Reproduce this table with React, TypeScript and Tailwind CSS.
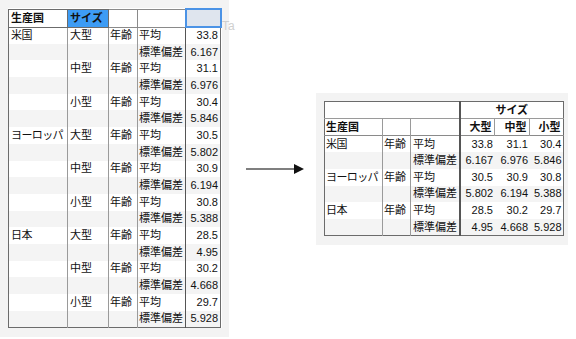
import React from 'react';

const font = { fontFamily: '"Liberation Sans", "Noto Sans CJK JP", sans-serif' };

type Stat = { label: string; value: string };
const countries = [
  { name: '米国', sizes: [['33.8', '6.167'], ['31.1', '6.976'], ['30.4', '5.846']] },
  { name: 'ヨーロッパ', sizes: [['30.5', '5.802'], ['30.9', '6.194'], ['30.8', '5.388']] },
  { name: '日本', sizes: [['28.5', '4.95'], ['30.2', '4.668'], ['29.7', '5.928']] },
];
const sizeNames = ['大型', '中型', '小型'];

const Arrow = () => (
  <svg width="60" height="12" viewBox="0 0 60 12">
    <line x1="0" y1="6" x2="50" y2="6" stroke="#555" strokeWidth="1.5" />
    <polygon points="48,1 58,6 48,11" fill="#111" />
  </svg>
);

const LeftTable = () => {
  const rows: { country: string; size: string; stat: Stat; first: boolean }[] = [];
  countries.forEach(c =>
    c.sizes.forEach((s, si) => {
      rows.push({ country: si === 0 ? c.name : '', size: sizeNames[si], stat: { label: '平均', value: s[0] }, first: true });
      rows.push({ country: '', size: '', stat: { label: '標準偏差', value: s[1] }, first: false });
    })
  );

  return (
    <table className="table-fixed border-collapse border border-[#6b6b6b] bg-white text-[11px] text-[#111]">
      <colgroup>
        <col className="w-[59px]" />
        <col className="w-[41px]" />
        <col className="w-[29px]" />
        <col className="w-[48px]" />
        <col className="w-[35px]" />
      </colgroup>
      <thead>
        <tr className="h-[18px]">
          <th className="border border-[#6b6b6b] px-[2px] text-left font-bold leading-none">生産国</th>
          <th className="border border-[#6b6b6b] bg-[#3d9cf5] px-[2px] text-left font-bold leading-none">サイズ</th>
          <th className="border border-[#8a8a8a]"></th>
          <th className="border border-[#8a8a8a]"></th>
          <th className="border-2 border-[#4b93e6] bg-[#dfe5ee]"></th>
        </tr>
      </thead>
      <tbody>
        {rows.map((r, i) => (
          <tr key={i} className={`h-[16.7px] ${i % 2 === 1 ? 'bg-[#f4f4f4]' : 'bg-white'}`}>
            <td className="border-r border-[#9a9a9a] px-[2px] leading-none tracking-[-0.6px] whitespace-nowrap">{r.country}</td>
            <td className="border-r border-[#9a9a9a] px-[2px] leading-none">{r.size}</td>
            <td className="border-r border-[#9a9a9a] px-[1px] leading-none">{r.first ? '年齢' : ''}</td>
            <td className="border-r border-[#555] px-[1px] leading-none whitespace-nowrap">{r.stat.label}</td>
            <td className="px-[2px] text-right leading-none">{r.stat.value}</td>
          </tr>
        ))}
      </tbody>
    </table>
  );
};

const RightTable = () => {
  const rows: { country: string; label: string; values: string[]; first: boolean }[] = [];
  countries.forEach(c => {
    rows.push({ country: c.name, label: '平均', values: c.sizes.map(s => s[0]), first: true });
    rows.push({ country: '', label: '標準偏差', values: c.sizes.map(s => s[1]), first: false });
  });

  return (
    <table className="table-fixed border-collapse border border-[#6b6b6b] bg-white text-[11px] text-[#111]">
      <colgroup>
        <col className="w-[58px]" />
        <col className="w-[28px]" />
        <col className="w-[48px]" />
        <col className="w-[34px]" />
        <col className="w-[35px]" />
        <col className="w-[34px]" />
      </colgroup>
      <thead>
        <tr className="h-[17px]">
          <th colSpan={3} className="border-b border-r-2 border-b-[#9a9a9a] border-r-[#555]"></th>
          <th colSpan={3} className="border-b border-[#9a9a9a] text-center font-bold leading-none">サイズ</th>
        </tr>
        <tr className="h-[17px] border-b border-[#8a8a8a]">
          <th className="border-r border-[#9a9a9a] px-[1px] text-left font-bold leading-none">生産国</th>
          <th className="border-r border-[#9a9a9a]"></th>
          <th className="border-r-2 border-[#555]"></th>
          {sizeNames.map((s, i) => (
            <th key={s} className={`px-[2px] text-right font-bold leading-none ${i < 2 ? 'border-r border-[#9a9a9a]' : ''}`}>{s}</th>
          ))}
        </tr>
      </thead>
      <tbody>
        {rows.map((r, i) => (
          <tr key={i} className={`h-[16.7px] ${i % 2 === 1 ? 'bg-[#f4f4f4]' : 'bg-white'}`}>
            <td className="border-r border-[#9a9a9a] px-[1px] leading-none tracking-[-0.6px] whitespace-nowrap">{r.country}</td>
            <td className="border-r border-[#9a9a9a] px-[1px] leading-none">{r.first ? '年齢' : ''}</td>
            <td className="border-r-2 border-[#555] px-[2px] leading-none whitespace-nowrap">{r.label}</td>
            {r.values.map((v, j) => (
              <td key={j} className="px-[1px] text-right leading-none">{v}</td>
            ))}
          </tr>
        ))}
      </tbody>
    </table>
  );
};

export default function App() {
  return (
    <div className="flex h-[339px] w-[576px] items-start bg-white" style={font}>
      <div className="relative h-[337px] w-[229px] shrink-0 bg-[#f3f3f3] pl-[8px] pt-[8px]">
        <LeftTable />
        <span className="absolute left-[222px] top-[17px] text-[12px] text-[#cfcfcf]">Ta</span>
      </div>
      <div className="ml-[17px] mt-[163px] shrink-0">
        <Arrow />
      </div>
      <div className="ml-[10px] mt-[93px] h-[152px] w-[252px] shrink-0 bg-[#f3f3f3] pl-[8px] pt-[8px]">
        <RightTable />
      </div>
    </div>
  );
}
